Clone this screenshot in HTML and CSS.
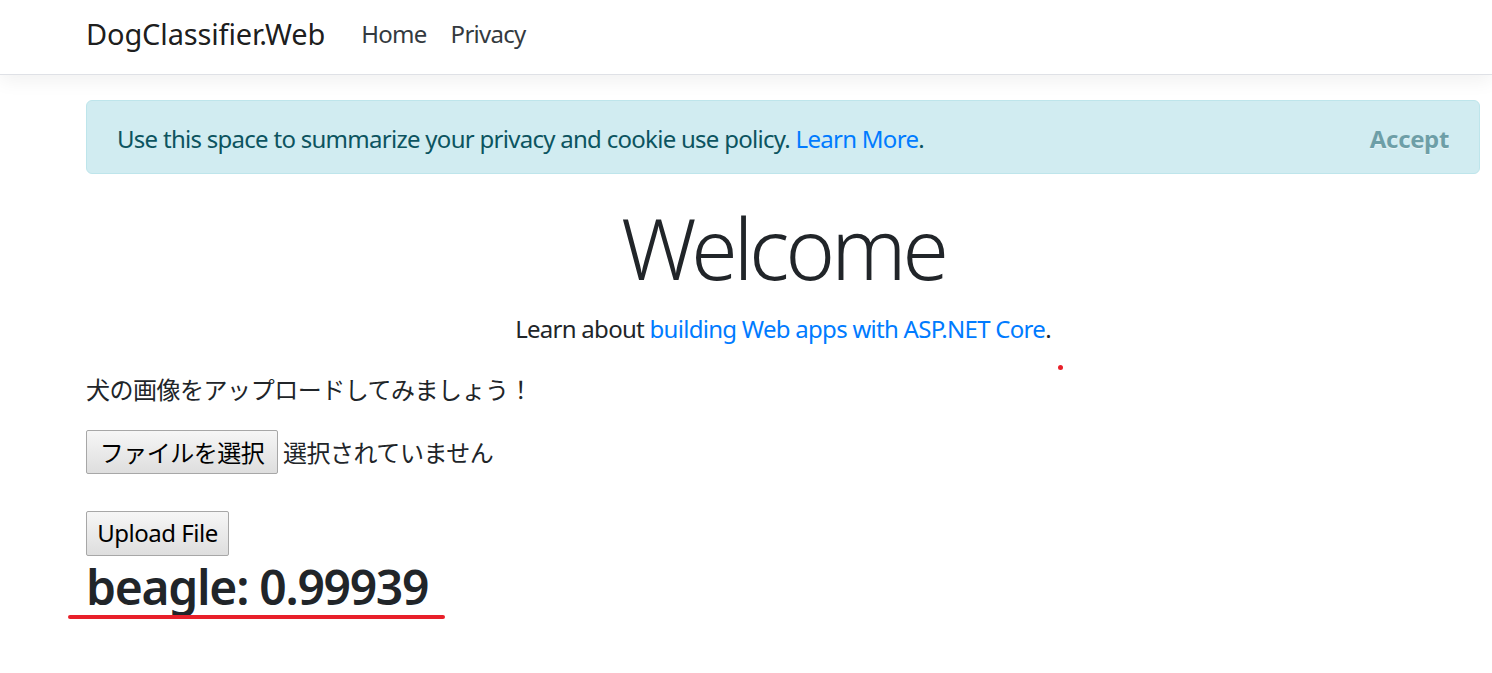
FILE: index.html
```html
<!DOCTYPE html>
<html lang="ja">
<head>
<meta charset="utf-8">
<title>Home Page - DogClassifier.Web</title>
<link rel="stylesheet" href="styles.css">
</head>
<body>
<header class="site-header">
  <nav class="navbar">
    <a class="brand" href="#">DogClassifier.Web</a>
    <ul class="nav">
      <li><a class="nav-link" href="#">Home</a></li>
      <li><a class="nav-link" href="#">Privacy</a></li>
    </ul>
  </nav>
</header>
<div class="container">
  <div class="alert">
    <span>Use this space to summarize your privacy and cookie use policy. <a href="#">Learn More</a>.</span>
    <button class="accept" type="button">Accept</button>
  </div>
  <main class="main">
    <div class="intro">
      <h1 class="display">Welcome</h1>
      <p class="lead-line">Learn about <a href="#">building Web apps with ASP.NET Core</a>.</p>
    </div>
    <p class="jp">犬の画像をアップロードしてみましょう！</p>
    <div class="file-row">
      <span class="btn file-btn">ファイルを選択</span>
      <span class="file-status">選択されていません</span>
    </div>
    <div class="upload-row">
      <button class="btn upload-btn" type="button">Upload File</button>
    </div>
    <h2 class="result">beagle: 0.99939</h2>
  </main>
</div>
<span class="mark-line"></span>
<span class="mark-dot"></span>
</body>
</html>
```

FILE: styles.css
```css
* { box-sizing: border-box; }
html, body { margin: 0; padding: 0; background: #fff; }
body {
  font-family: "Noto Sans", "Noto Sans CJK JP", sans-serif;
  font-size: 24px;
  line-height: 1.5;
  color: #212529;
  letter-spacing: -0.03em;
}
a { color: #007bff; text-decoration: none; }

.site-header {
  border-bottom: 1px solid #dfe1e6;
  box-shadow: 0 6px 18px rgba(0,0,0,.06);
  background: #fff;
}
.navbar {
  height: 74px;
  display: flex;
  align-items: center;
  padding-left: 86px;
  padding-bottom: 7px;
}
.brand {
  font-size: 29px;
  color: rgba(0,0,0,.9);
  margin-right: 24px;
  letter-spacing: -0.005em;
}
.nav { list-style: none; margin: 0; padding: 0; display: flex; }
.nav-link { display: block; padding: 0 12px; color: #343a40; }

.container { padding: 0 12px 0 86px; }

.alert {
  margin-top: 25px;
  height: 74px;
  border: 1px solid #bee5eb;
  background: #d1ecf1;
  color: #0c5460;
  border-radius: 6px;
  padding: 3px 30px 0;
  display: flex;
  align-items: center;
  justify-content: space-between;
}
.accept {
  border: 0;
  background: none;
  padding: 0;
  font: inherit;
  font-weight: 700;
  color: #0c5460;
  opacity: .5;
  text-shadow: 0 1px 0 #fff;
  letter-spacing: -0.015em;
}

.main { padding-top: 24px; }
.intro { text-align: center; }
.display {
  font-size: 84px;
  font-weight: 300;
  line-height: 1.2;
  margin: 0 0 12px;
  letter-spacing: -0.046em;
}
.lead-line { margin: 0 0 24px; }
.jp {
  margin: 0 0 23px;
  font-family: "Noto Sans CJK JP", sans-serif;
  letter-spacing: -0.02em;
}

.file-row { display: flex; align-items: center; height: 44px; }
.btn {
  font-family: "Noto Sans", "Noto Sans CJK JP", sans-serif;
  font-size: 24px;
  line-height: 1;
  color: #000;
  border: 1px solid #a7a7a7;
  border-radius: 2px;
  background: linear-gradient(#f6f6f6, #dedede);
  padding: 0 11px;
  display: flex;
  align-items: center;
  justify-content: center;
  white-space: nowrap;
}
.file-btn { height: 44px; width: 192px; font-family: "Noto Sans CJK JP", sans-serif; letter-spacing: -0.02em; }
.file-status { margin-left: 5px; font-family: "Noto Sans CJK JP", sans-serif; letter-spacing: -0.02em; }

.upload-row { margin-top: 37px; display: flex; }
.upload-btn { height: 45px; width: 143px; letter-spacing: -0.02em; }

.result {
  margin: 2px 0 0;
  font-size: 48px;
  font-weight: 600;
  line-height: 1.2;
  letter-spacing: -0.027em;
}

.mark-line {
  position: absolute;
  left: 68px;
  top: 615px;
  width: 377px;
  height: 4px;
  border-radius: 2px;
  background: #e8202a;
}
.mark-dot {
  position: absolute;
  left: 1058px;
  top: 365px;
  width: 5px;
  height: 5px;
  border-radius: 50%;
  background: #e8202a;
}
```
